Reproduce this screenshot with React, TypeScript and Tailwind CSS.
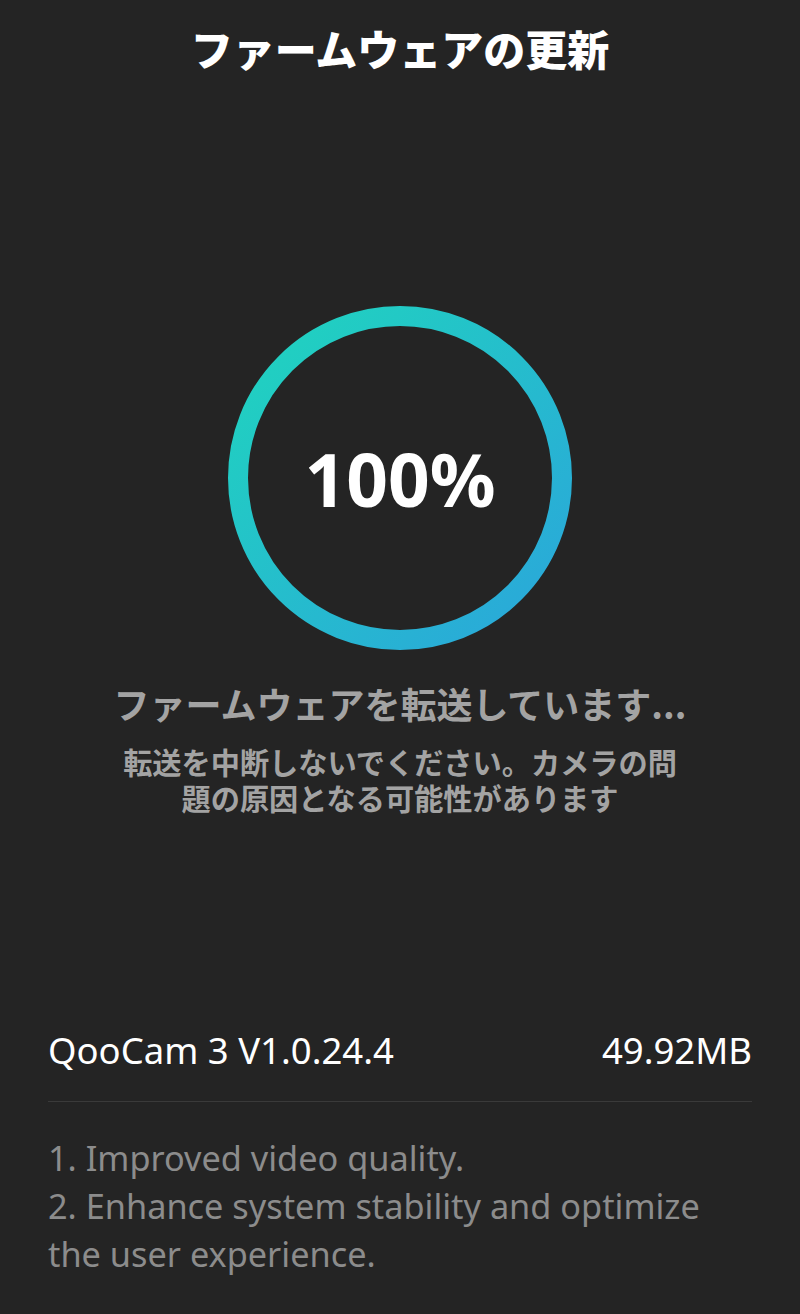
import React from 'react';

const jp = '"Noto Sans CJK JP", "Noto Sans", sans-serif';
const latin = '"Noto Sans", "Noto Sans CJK JP", sans-serif';

function ProgressRing({ percent }: { percent: number }) {
  const r = 162;
  const c = 2 * Math.PI * r;
  return (
    <div className="relative w-[344px] h-[344px]">
      <svg width="344" height="344" viewBox="0 0 344 344" className="absolute inset-0">
        <defs>
          <linearGradient id="ring" x1="0" y1="0" x2="344" y2="344" gradientUnits="userSpaceOnUse">
            <stop offset="0%" stopColor="#1fd6bd" />
            <stop offset="100%" stopColor="#2ba4dc" />
          </linearGradient>
        </defs>
        <circle
          cx="172"
          cy="172"
          r={r}
          fill="none"
          stroke="url(#ring)"
          strokeWidth="20"
          strokeDasharray={c}
          strokeDashoffset={c * (1 - percent / 100)}
        />
      </svg>
      <div className="absolute inset-0 flex items-center justify-center">
        <span className="text-white font-bold text-[73px] leading-none" style={{ fontFamily: latin }}>
          {percent}%
        </span>
      </div>
    </div>
  );
}

export default function App() {
  return (
    <div className="w-[800px] h-[1314px] bg-[#242424] flex flex-col" style={{ fontFamily: jp }}>
      {/* Header */}
      <div className="h-[104px] flex items-center justify-center pb-[8px]">
        <h1 className="text-white font-black text-[42px] leading-none">ファームウェアの更新</h1>
      </div>

      {/* Progress */}
      <div className="flex justify-center mt-[202px]">
        <ProgressRing percent={100} />
      </div>

      <div className="flex flex-col items-center mt-[31px]">
        <p className="text-[#a3a3a3] font-bold text-[36px] leading-[44px]">ファームウェアを転送しています...</p>
        <div className="text-[#a3a3a3] font-bold text-[29.2px] leading-[36px] mt-[18px] text-center whitespace-nowrap">
          <p>転送を中断しないでください。カメラの問</p>
          <p>題の原因となる可能性があります</p>
        </div>
      </div>

      {/* Firmware info */}
      <div className="mt-auto px-[48px] pb-[36px]" style={{ fontFamily: latin }}>
        <div className="flex items-center justify-between h-[52px] text-white text-[36.5px]">
          <span>QooCam 3 V1.0.24.4</span>
          <span>49.92MB</span>
        </div>
        <div className="h-px bg-[#3a3a3a] mt-[25px]" />
        <div className="mt-[32px] text-[#8c8c8c] text-[34.3px] leading-[48px] w-[680px]">
          <p>1. Improved video quality.</p>
          <p>2. Enhance system stability and optimize the user experience.</p>
        </div>
      </div>
    </div>
  );
}
